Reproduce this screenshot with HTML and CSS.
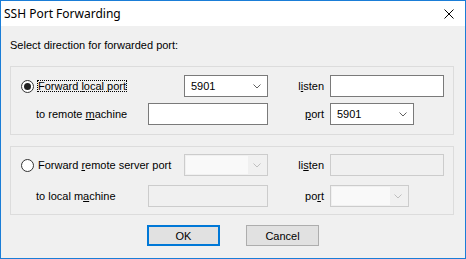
FILE: index.html
```html
<!DOCTYPE html>
<html lang="en">
<head>
  <meta charset="UTF-8">
  <title>SSH Port Forwarding</title>
  <link rel="stylesheet" href="styles.css">
</head>
<body>
  <div class="window">
    <div class="titlebar">
      <span class="title">SSH Port Forwarding</span>
      <svg class="close" width="10" height="10" viewBox="0 0 10 10">
        <path d="M0.5 0.5 L9.5 9.5 M9.5 0.5 L0.5 9.5" stroke="#000" stroke-width="1" fill="none"/>
      </svg>
    </div>

    <div class="content">
      <p class="intro">Select direction for forwarded port:</p>

      <!-- local forwarding -->
      <div class="group">
        <label class="radio-label">
          <span class="radio checked"></span>
          <span class="focus">Forward <u>l</u>ocal port</span>
        </label>
        <div class="combo">
          <span class="value">5901</span>
          <svg width="8" height="5" viewBox="0 0 8 5"><polyline points="0.5,0.5 4,4 7.5,0.5" stroke="#606060" fill="none"/></svg>
        </div>
        <span class="field-label">l<u>i</u>sten</span>
        <div class="textbox wide"></div>

        <span class="sub-label">to remote <u>m</u>achine</span>
        <div class="textbox machine"></div>
        <span class="field-label"><u>p</u>ort</span>
        <div class="combo small">
          <span class="value">5901</span>
          <svg width="8" height="5" viewBox="0 0 8 5"><polyline points="0.5,0.5 4,4 7.5,0.5" stroke="#606060" fill="none"/></svg>
        </div>
      </div>

      <!-- remote forwarding -->
      <div class="group second">
        <label class="radio-label">
          <span class="radio"></span>
          <span class="plain">Forward <u>r</u>emote server port</span>
        </label>
        <div class="combo disabled">
          <span class="value"></span>
          <svg width="8" height="5" viewBox="0 0 8 5"><polyline points="0.5,0.5 4,4 7.5,0.5" stroke="#bfbfbf" fill="none"/></svg>
        </div>
        <span class="field-label">li<u>s</u>ten</span>
        <div class="textbox wide disabled"></div>

        <span class="sub-label">to local m<u>a</u>chine</span>
        <div class="textbox machine disabled"></div>
        <span class="field-label">po<u>r</u>t</span>
        <div class="combo small disabled">
          <span class="value"></span>
          <svg width="8" height="5" viewBox="0 0 8 5"><polyline points="0.5,0.5 4,4 7.5,0.5" stroke="#bfbfbf" fill="none"/></svg>
        </div>
      </div>

      <div class="buttons">
        <button class="btn default">OK</button>
        <button class="btn">Cancel</button>
      </div>
    </div>
  </div>
</body>
</html>
```

FILE: styles.css
```css
body {
  margin: 0;
  background: #f0f0f0;
  font-family: "Liberation Sans", Arial, sans-serif;
  font-size: 11px;
  color: #000;
}

.window {
  width: 464px;
  height: 257px;
  border: 1px solid #1a7dd7;
  background: #f0f0f0;
  overflow: hidden;
}

.titlebar {
  height: 25px;
  background: #fff;
  display: flex;
  align-items: center;
  justify-content: space-between;
  padding: 0 11px 0 3px;
}

.title {
  font-family: "Noto Sans", "Open Sans", sans-serif;
  font-size: 12px;
  line-height: 16px;
}

.content {
  padding: 0 11px 0 9px;
}

.intro {
  margin: 0;
  padding-top: 13px;
  line-height: 13px;
}

.group {
  margin-top: 14px;
  border: 1px solid #dcdcdc;
  padding: 8px 9px 9px 10px;
  display: grid;
  grid-template-columns: 127px 36px 84px 62px 114px;
  grid-template-rows: 22px 22px;
  row-gap: 6px;
  align-items: center;
}

.group.second {
  margin-top: 11px;
  padding-top: 7px;
  padding-bottom: 7px;
  row-gap: 9px;
}

.radio-label {
  grid-column: 1 / 3;
  display: flex;
  align-items: center;
  gap: 3px;
}

.radio {
  width: 11px;
  height: 11px;
  border: 1px solid #333;
  border-radius: 50%;
  background: #fff;
  display: flex;
  align-items: center;
  justify-content: center;
}

.radio.checked::after {
  content: "";
  width: 7px;
  height: 7px;
  border-radius: 50%;
  background: #222;
}

.focus {
  line-height: 10px;
  outline: 1px dotted #000;
  margin-left: 1px;
}

.plain {
  line-height: 12px;
  margin-left: 1px;
}

.sub-label {
  padding-left: 15px;
}

.field-label {
  text-align: right;
  padding-right: 6px;
}

.textbox {
  height: 20px;
  border: 1px solid #7a7a7a;
  background: #fff;
}

.textbox.machine {
  grid-column: 2 / 4;
}

.textbox.disabled {
  border-color: #cccccc;
  background: #f0f0f0;
}

.combo {
  height: 20px;
  border: 1px solid #7a7a7a;
  background: #fff;
  display: flex;
  align-items: center;
  justify-content: space-between;
  padding: 0 6px 0 6px;
}

.combo.small {
  width: 70px;
}

.combo.disabled {
  border-color: #cccccc;
  background: #f0f0f0;
  padding-left: 1px;
}

.combo.disabled .value {
  width: 62px;
  height: 18px;
  background: #f9f9f9;
}

.combo.small.disabled .value {
  width: 58px;
}

.buttons {
  display: flex;
  justify-content: center;
  gap: 26px;
  margin-top: 10px;
  margin-left: -9px;
  margin-right: -11px;
}

.btn {
  width: 73px;
  height: 21px;
  border: 1px solid #adadad;
  background: #e1e1e1;
  font-family: "Liberation Sans", Arial, sans-serif;
  font-size: 11px;
  color: #000;
  padding: 0;
}

.btn.default {
  border: 2px solid #0078d7;
}
```
